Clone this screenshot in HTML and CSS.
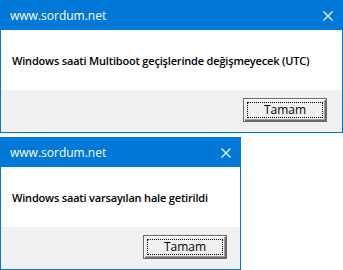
FILE: index.html
```html
<!DOCTYPE html>
<html lang="tr">

<head>
    <meta charset="UTF-8">
    <meta name="viewport" content="width=device-width, initial-scale=1.0">
    <title>Sordum</title>
    <link rel="stylesheet" href="styles.css">
</head>

<body>
    <div class="stack">
        <!-- First message box -->
        <div class="dialog wide">
            <div class="titlebar">
                <span class="title">www.sordum.net</span>
                <svg class="close" width="10" height="10" viewBox="0 0 10 10">
                    <path d="M0.5 0.5 L9.5 9.5 M9.5 0.5 L0.5 9.5" stroke="#ffffff" stroke-width="1.1" fill="none"/>
                </svg>
            </div>
            <div class="content">
                <p class="message">Windows saati Multiboot geçişlerinde değişmeyecek (UTC)</p>
            </div>
            <div class="footer">
                <button type="button" class="btn"><span class="focus">Tamam</span></button>
            </div>
        </div>

        <!-- Second message box -->
        <div class="dialog narrow">
            <div class="titlebar">
                <span class="title">www.sordum.net</span>
                <svg class="close" width="10" height="10" viewBox="0 0 10 10">
                    <path d="M0.5 0.5 L9.5 9.5 M9.5 0.5 L0.5 9.5" stroke="#ffffff" stroke-width="1.1" fill="none"/>
                </svg>
            </div>
            <div class="content">
                <p class="message">Windows saati varsayılan hale getirildi</p>
            </div>
            <div class="footer">
                <button type="button" class="btn"><span class="focus">Tamam</span></button>
            </div>
        </div>
    </div>
</body>

</html>
```

FILE: styles.css
```css
* {
    box-sizing: border-box;
}

body {
    margin: 0;
    background-color: #ffffff;
    font-family: "Open Sans", "DejaVu Sans", sans-serif;
}

.stack {
    display: flex;
    flex-direction: column;
    align-items: flex-start;
    gap: 4px;
}

/* Window frame */
.dialog {
    display: flex;
    flex-direction: column;
    height: 133px;
    border: 1px solid #0078d7;
    background-color: #ffffff;
}

.dialog.wide {
    width: 343px;
}

.dialog.narrow {
    width: 241px;
}

.titlebar {
    display: flex;
    align-items: center;
    justify-content: space-between;
    height: 29px;
    padding: 0 9px 0 9px;
    background-color: #0078d7;
    color: #ffffff;
}

.title {
    font-size: 12px;
    line-height: 16px;
}

.close {
    display: block;
}

.content {
    display: flex;
    align-items: center;
    height: 60px;
    padding-left: 11px;
}

.message {
    margin: 0;
    font-size: 11px;
    font-weight: 600;
    letter-spacing: -0.18px;
    color: #000000;
}

.footer {
    flex: 1;
    display: flex;
    justify-content: flex-end;
    align-items: flex-start;
    padding: 8px 15px 0 0;
    background-color: #f0f0f0;
}

.narrow .footer {
    padding-right: 13px;
}

/* Classic default push button */
.btn {
    width: 84px;
    height: 24px;
    padding: 3px;
    border: 1px solid #6a6a6a;
    background-color: #f0f0f0;
    box-shadow: inset 1px 1px #ffffff, inset -1px -1px #6a6a6a, inset -2px -2px #a0a0a0;
    font-family: "Open Sans", "DejaVu Sans", sans-serif;
    font-size: 12px;
    color: #000000;
}

.focus {
    display: flex;
    align-items: center;
    justify-content: center;
    height: 100%;
    border: 1px dotted #000000;
    line-height: 14px;
}
```
